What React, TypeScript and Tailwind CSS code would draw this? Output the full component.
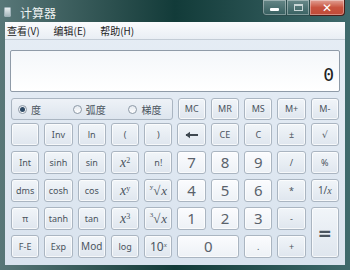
import React from "react";

const cjk = { fontFamily: '"Noto Sans CJK SC", "Noto Sans", sans-serif' };
const ui = { fontFamily: '"Noto Sans", "DejaVu Sans", sans-serif' };
const serif = { fontFamily: '"Liberation Serif", serif' };

function Key({
  children,
  light,
  className = "",
}: {
  children?: React.ReactNode;
  light?: boolean;
  className?: string;
}) {
  return (
    <div
      className={
        "flex items-center justify-center rounded-[3px] border border-[#aab5c1] text-[#4a545e] shadow-[inset_0_0_0_1px_rgba(255,255,255,0.7)] " +
        (light
          ? "bg-linear-to-b from-[#fbfcfe] to-[#edf1f6] "
          : "bg-linear-to-b from-[#f1f5f9] to-[#dfe6ee] ") +
        className
      }
      style={ui}
    >
      {children}
    </div>
  );
}

function X({ sup }: { sup?: string }) {
  return (
    <span className="text-[14px] italic text-[#4a545e]" style={serif}>
      x{sup && <sup className="text-[8px] not-italic">{sup}</sup>}
    </span>
  );
}

function Root({ idx }: { idx: string }) {
  return (
    <span className="flex items-start text-[13px] leading-none text-[#4a545e]" style={serif}>
      <span className="text-[7px] leading-none">{idx}</span>
      <span>√</span>
      <i className="ml-[1px]">x</i>
    </span>
  );
}

function Radio({ on, label, w }: { on?: boolean; label: string; w: string }) {
  return (
    <div className={"flex items-center gap-[4px] " + w}>
      <span className="flex h-[9px] w-[9px] items-center justify-center rounded-full border border-[#8d99a6] bg-linear-to-b from-[#e4e9ef] to-white">
        {on && <span className="h-[5px] w-[5px] rounded-full bg-[#2e4a66]" />}
      </span>
      <span className="text-[10px] text-[#4a545e]" style={cjk}>
        {label}
      </span>
    </div>
  );
}

export default function App() {
  const small = "text-[9px]";
  const num = "text-[15px] text-[#5a626b]";
  return (
    <div className="flex h-[270px] w-[350px] flex-col bg-linear-to-r from-[#587778] via-[#123b39] to-[#3f6a6c]">
      <div className="flex h-[22px] items-start">
        <div className="mt-[7px] ml-[4px] h-[10px] w-[7px] rounded-[1px] border border-[#9fb2b8] bg-linear-to-b from-[#e8eef0] to-[#a7b8bd]" />
        <span className="mt-[4px] ml-[9px] text-[12px] text-[#eef3f3]" style={cjk}>
          计算器
        </span>
        <div className="mr-[5px] ml-auto flex h-[16px]">
          <div className="flex w-[25px] items-center justify-center rounded-bl-[4px] border border-t-0 border-[#2c4d4e] bg-linear-to-b from-[#8ca7a8]/60 to-[#3d6465]/60 shadow-[inset_0_0_0_1px_rgba(255,255,255,0.35)]">
            <div className="mt-[4px] h-[3px] w-[9px] rounded-[1px] bg-white" />
          </div>
          <div className="flex w-[23px] items-center justify-center border border-t-0 border-l-0 border-[#2c4d4e] bg-linear-to-b from-[#8ca7a8]/60 to-[#3d6465]/60 shadow-[inset_0_0_0_1px_rgba(255,255,255,0.35)]">
            <div className="h-[7px] w-[9px] border border-[#c9d6d7] border-t-2" />
          </div>
          <div className="flex w-[35px] items-center justify-center rounded-br-[4px] border border-t-0 border-l-0 border-[#4a1d18] bg-linear-to-b from-[#e0a095] via-[#c8533f] to-[#c04a38] shadow-[inset_0_0_0_1px_rgba(255,255,255,0.35)]">
            <span className="text-[12px] font-bold leading-none text-white" style={ui}>
              ✕
            </span>
          </div>
        </div>
      </div>

      <div className="mx-[5px] mb-[5px] flex flex-1 flex-col bg-linear-to-b from-[#e6edf5] to-[#d9e3ee]">
        <div className="flex h-[18px] items-center gap-[14px] border-b border-[#c3ccd6] bg-linear-to-b from-[#fafbfd] to-[#e9eef4] pl-[2px] text-[10px] text-[#222]" style={cjk}>
          <span>查看(V)</span>
          <span>编辑(E)</span>
          <span>帮助(H)</span>
        </div>

        <div className="px-[5px] pt-[10px]">
          <div className="flex h-[42px] items-end justify-end rounded-[2px] border border-[#8f9ba8] bg-linear-to-b from-[#f4f7fa] to-white pr-[5px] pb-[7px]">
            <span className="text-[18px] leading-none text-[#222]" style={{ fontFamily: '"DejaVu Sans Mono", monospace' }}>
              0
            </span>
          </div>
        </div>

        <div className="px-[6px] pt-[6px]">
          <div className="grid h-[22px] grid-cols-10 gap-x-[5px]">
            <div className="col-span-5 flex items-center rounded-[3px] border border-[#aab5c1] bg-linear-to-b from-[#eef2f7] to-[#dde5ee] pl-[6px]">
              <Radio on label="度" w="w-[56px]" />
              <Radio label="弧度" w="w-[57px]" />
              <Radio label="梯度" w="w-[44px]" />
            </div>
            {["MC", "MR", "MS", "M+", "M-"].map((m) => (
              <Key key={m} className={small}>
                {m}
              </Key>
            ))}
          </div>

          <div className="mt-[3px] grid h-[135px] grid-cols-10 grid-rows-5 gap-x-[5px] gap-y-[5px]">
            <Key />
            <Key className={small}>Inv</Key>
            <Key className={small}>ln</Key>
            <Key className={small}>(</Key>
            <Key className={small}>)</Key>
            <Key>
              <svg width="14" height="8" viewBox="0 0 14 8">
                <path d="M1 4 L13 4" stroke="#3f4850" strokeWidth="2" />
                <path d="M0.5 4 L5 0.8 L5 7.2 Z" fill="#3f4850" />
              </svg>
            </Key>
            <Key className={small}>CE</Key>
            <Key className={small}>C</Key>
            <Key className={small}>±</Key>
            <Key className={small}>√</Key>

            <Key className={small}>Int</Key>
            <Key className={small}>sinh</Key>
            <Key className={small}>sin</Key>
            <Key><X sup="2" /></Key>
            <Key className={small}>n!</Key>
            <Key light className={num}>7</Key>
            <Key light className={num}>8</Key>
            <Key light className={num}>9</Key>
            <Key className={small}>/</Key>
            <Key className={small}>%</Key>

            <Key className={small}>dms</Key>
            <Key className={small}>cosh</Key>
            <Key className={small}>cos</Key>
            <Key><X sup="y" /></Key>
            <Key><Root idx="y" /></Key>
            <Key light className={num}>4</Key>
            <Key light className={num}>5</Key>
            <Key light className={num}>6</Key>
            <Key className={small}>*</Key>
            <Key className={small}>
              <span className="text-[10px]">1/<i style={serif}>x</i></span>
            </Key>

            <Key className={small}>π</Key>
            <Key className={small}>tanh</Key>
            <Key className={small}>tan</Key>
            <Key><X sup="3" /></Key>
            <Key><Root idx="3" /></Key>
            <Key light className={num}>1</Key>
            <Key light className={num}>2</Key>
            <Key light className={num}>3</Key>
            <Key className={small}>-</Key>
            <Key className="row-span-2 text-[22px] font-bold text-[#3f4850]">=</Key>

            <Key className={small}>F-E</Key>
            <Key className={small}>Exp</Key>
            <Key className="text-[10px]">Mod</Key>
            <Key className={small}>log</Key>
            <Key>
              <span className="text-[12px] text-[#4a545e]" style={ui}>
                10<sup className="text-[7px]" style={serif}><i>x</i></sup>
              </span>
            </Key>
            <Key light className={"col-span-2 " + num}>0</Key>
            <Key light className={small}>.</Key>
            <Key className={small}>+</Key>
          </div>
        </div>
      </div>
    </div>
  );
}
